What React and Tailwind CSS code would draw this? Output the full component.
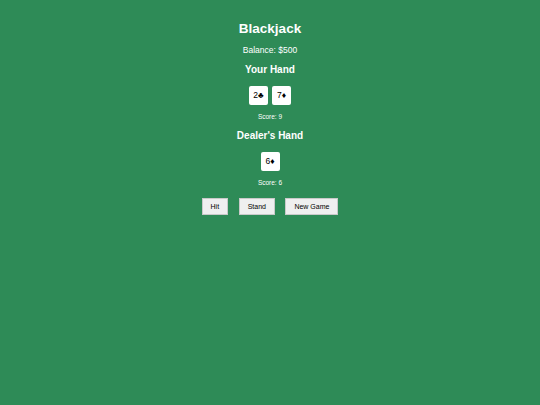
const player = [
  { rank: '2', suit: '♣' },
  { rank: '7', suit: '♦' },
]
const dealer = [{ rank: '6', suit: '♦' }]

function Card({ card }) {
  return (
    <div className="flex h-[19px] w-[19px] items-center justify-center rounded-[2px] bg-white text-[8.5px] leading-none text-black">
      {card.rank}
      {card.suit}
    </div>
  )
}

function Hand({ title, cards, score }) {
  return (
    <>
      <h2 className="mt-[9px] text-[10px] font-bold leading-[12px]">{title}</h2>
      <div className="mt-[10px] flex gap-[4px]">
        {cards.map((c, i) => (
          <Card key={i} card={c} />
        ))}
      </div>
      <p className="mt-[8px] text-[6.5px] leading-[8px]">Score: {score}</p>
    </>
  )
}

export default function App() {
  return (
    <div
      className="flex min-h-[405px] w-full flex-col items-center bg-[#2e8b57] pt-[21px] text-white"
      style={{ fontFamily: '"Liberation Sans", Arial, sans-serif' }}
    >
      <h1 className="text-[13.5px] font-bold leading-[16px]">Blackjack</h1>
      <p className="mt-[8px] text-[8.5px] leading-[10px]">Balance: $500</p>
      <Hand title="Your Hand" cards={player} score={9} />
      <Hand title="Dealer's Hand" cards={dealer} score={6} />
      <div className="mt-[11px] flex gap-[10.5px]">
        {['Hit', 'Stand', 'New Game'].map((label) => (
          <button
            key={label}
            type="button"
            className="h-[17px] border border-[#c9c9c9] bg-[#efefef] px-[8px] text-[7px] leading-none text-black"
          >
            {label}
          </button>
        ))}
      </div>
    </div>
  )
}
